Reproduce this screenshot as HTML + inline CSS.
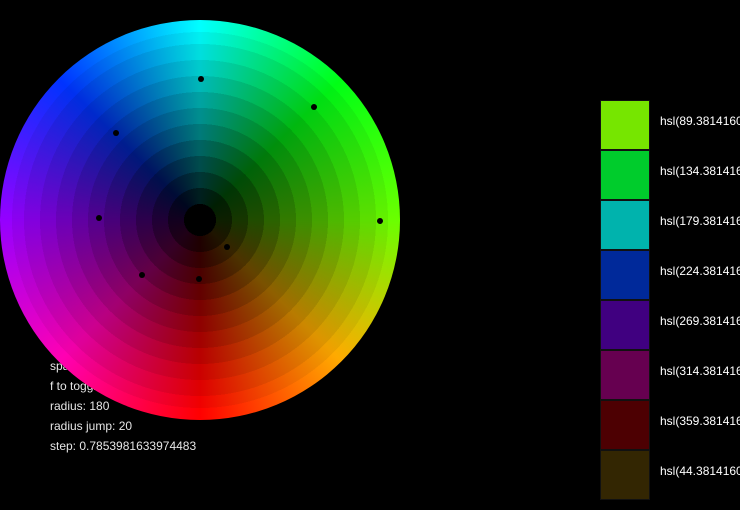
<!DOCTYPE html>
<html><head><style>
body{margin:0;background:#000;width:740px;height:510px;overflow:hidden;position:relative;font-family:"Liberation Sans",sans-serif;}
.t{position:absolute;left:50px;color:#e6e6e6;font-size:12px;line-height:14px;}
.wheel{position:absolute;left:0;top:20px;width:400px;height:400px;border-radius:50%;
background:
radial-gradient(circle 200px at 200px 200px,
rgba(0,0,0,1) 0 16px,rgba(0,0,0,.88) 16px 32px,rgba(0,0,0,.79) 32px 48px,rgba(0,0,0,.7) 48px 64px,rgba(0,0,0,.61) 64px 80px,rgba(0,0,0,.52) 80px 96px,rgba(0,0,0,.44) 96px 112px,rgba(0,0,0,.36) 112px 128px,rgba(0,0,0,.28) 128px 144px,rgba(0,0,0,.2) 144px 160px,rgba(0,0,0,.13) 160px 176px,rgba(0,0,0,.06) 176px 188px,rgba(0,0,0,0) 188px),
conic-gradient(from 0deg at 200px 200px,hsl(180,100%,50%),hsl(125,100%,50%) 45deg,hsl(95,100%,50%) 90deg,hsl(40,100%,50%) 135deg,hsl(0,100%,50%) 180deg,hsl(318,100%,50%) 225deg,hsl(275,100%,50%) 270deg,hsl(228,100%,50%) 315deg,hsl(180,100%,50%) 360deg);}
.d{position:absolute;width:6px;height:6px;border-radius:50%;background:#000;}
.s{position:absolute;left:600px;width:48px;height:48px;border:1px solid #111;}
.l{position:absolute;left:660px;color:#fff;font-size:12px;white-space:nowrap;}
</style></head><body>
<div class="t" style="top:359px">space to ...</div>
<div class="t" style="top:379px">f to toggle</div>
<div class="t" style="top:399px">radius: 180</div>
<div class="t" style="top:419px">radius jump: 20</div>
<div class="t" style="top:439px">step: 0.7853981633974483</div>
<div class="wheel"></div>
<div class="d" style="left:198px;top:76px"></div>
<div class="d" style="left:311px;top:104px"></div>
<div class="d" style="left:113px;top:130px"></div>
<div class="d" style="left:96px;top:215px"></div>
<div class="d" style="left:377px;top:218px"></div>
<div class="d" style="left:224px;top:244px"></div>
<div class="d" style="left:139px;top:272px"></div>
<div class="d" style="left:196px;top:276px"></div>
<div class="s" style="top:100px;background:#76e600"></div><div class="l" style="top:114px">hsl(89.38141603</div>
<div class="s" style="top:150px;background:#00cc2c"></div><div class="l" style="top:164px">hsl(134.3814160</div>
<div class="s" style="top:200px;background:#00b3ad"></div><div class="l" style="top:214px">hsl(179.3814160</div>
<div class="s" style="top:250px;background:#00299a"></div><div class="l" style="top:264px">hsl(224.3814160</div>
<div class="s" style="top:300px;background:#400080"></div><div class="l" style="top:314px">hsl(269.3814160</div>
<div class="s" style="top:350px;background:#660050"></div><div class="l" style="top:364px">hsl(314.3814160</div>
<div class="s" style="top:400px;background:#4d0002"></div><div class="l" style="top:414px">hsl(359.3814160</div>
<div class="s" style="top:450px;background:#332602"></div><div class="l" style="top:464px">hsl(44.38141603</div>
</body></html>
